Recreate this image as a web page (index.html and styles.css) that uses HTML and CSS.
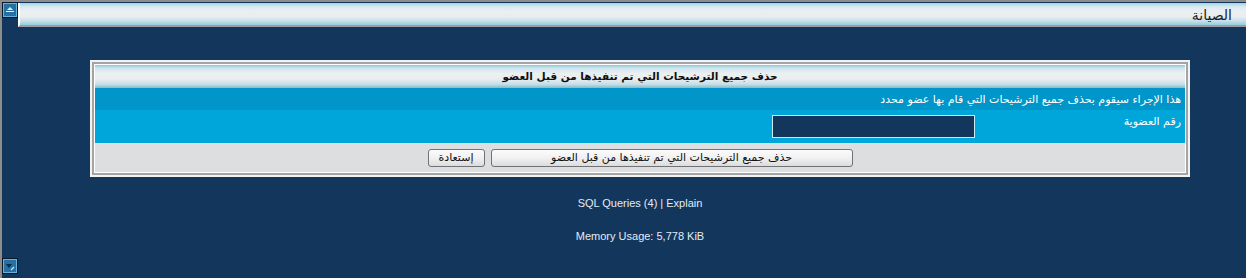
FILE: index.html
```html
<!DOCTYPE html>
<html lang="ar">
<head>
<meta charset="utf-8">
<title>الصيانة</title>
<link rel="stylesheet" href="styles.css">
</head>
<body>
<div class="topbar">
  <span class="ctl ctl-up">
    <svg width="12" height="12" viewBox="0 0 12 12"><polygon points="3,6 9,6 6,3" fill="#dff2fb"/><rect x="2" y="7" width="8" height="1" fill="#dff2fb"/></svg>
  </span>
  <div class="titlebar" dir="rtl">الصيانة</div>
</div>

<main class="main">
  <div class="panel" dir="rtl">
    <div class="panel-frame">
      <div class="panel-body">
        <div class="panel-head">حذف جميع الترشيحات التي تم تنفيذها من قبل العضو</div>
        <div class="row row-desc">هذا الإجراء سيقوم بحذف جميع الترشيحات التي قام بها عضو محدد</div>
        <div class="row row-field">
          <label class="field-label" for="uid">رقم العضوية</label>
          <div class="field-cell"><input id="uid" class="field-input" type="text"></div>
        </div>
        <div class="row row-actions">
          <button class="btn btn-main" type="button">حذف جميع الترشيحات التي تم تنفيذها من قبل العضو</button>
          <button class="btn btn-reset" type="button">إستعادة</button>
        </div>
      </div>
    </div>
  </div>

  <div class="footer">
    <p class="foot-line">SQL Queries (4) | Explain</p>
    <p class="foot-line">Memory Usage: 5,778 KiB</p>
  </div>
</main>

<div class="bottombar">
  <span class="ctl ctl-down">
    <svg width="12" height="12" viewBox="0 0 12 12"><polygon points="2,4 8,4 5,8" fill="#0d2b4a"/><line x1="7" y1="10" x2="10" y2="7" stroke="#bfe6f7" stroke-width="1.2"/></svg>
  </span>
</div>
</body>
</html>
```

FILE: styles.css
```css
html, body {
  margin: 0;
  padding: 0;
}
body {
  height: 278px;
  box-sizing: border-box;
  background: #13365c;
  border-top: 2px solid #8c8c8c;
  border-left: 2px solid #8c8c8c;
  display: flex;
  flex-direction: column;
  font-family: "Liberation Sans", "DejaVu Sans", sans-serif;
  overflow: hidden;
}

.topbar {
  display: flex;
  align-items: flex-start;
  height: 25px;
}
.ctl {
  display: flex;
  align-items: center;
  justify-content: center;
  width: 14px;
  height: 14px;
  background: #2670a2;
  border: 1px solid #0a1a2a;
  box-shadow: inset 0 0 0 1px #66b4dc;
  flex: none;
}
.titlebar {
  flex: 1;
  margin-top: 1px;
  height: 22px;
  border-left: 2px solid #ffffff;
  border-bottom: 2px solid #9a9ea2;
  background: linear-gradient(#a4d3e6 0%, #d9ecf3 18%, #eceff1 40%, #e9edef 62%, #c4e1eb 82%, #98cbdd 100%);
  font-family: "DejaVu Sans", sans-serif;
  font-size: 14px;
  line-height: 24px;
  color: #1b1b1b;
  padding-right: 14px;
  text-align: right;
}

.main {
  padding: 33px 56px 0 88px;
}
.panel {
  border: 2px solid #f2f2f2;
}
.panel-frame {
  border: 2px solid #a2a4a6;
}
.panel-body {
  border: 1px solid #ffffff;
  font-family: "DejaVu Sans", sans-serif;
}
.panel-head {
  height: 23px;
  line-height: 23px;
  text-align: center;
  font-weight: bold;
  font-size: 10.5px;
  color: #101010;
  background: linear-gradient(#8fc6dc 0%, #cfe6ee 14%, #edf0f1 38%, #e9edef 62%, #c2dfe9 84%, #8fb6c5 100%);
}
.row {
  color: #ffffff;
  font-size: 11px;
}
.row-desc {
  background: #0096c9;
  height: 22px;
  line-height: 24px;
  padding-right: 4px;
}
.row-field {
  background: #00a6da;
  height: 33px;
  border-bottom: 1px solid #c9e8f2;
  display: grid;
  grid-template-columns: 206px 1fr;
}
.field-label {
  padding: 5px 4px 0 0;
  line-height: 14px;
}
.field-cell {
  padding: 5px 4px 0 0;
}
.field-input {
  display: block;
  box-sizing: border-box;
  width: 203px;
  height: 23px;
  margin: 0;
  background: #13365c;
  border: 1px solid #cbe8f5;
  color: #ffffff;
  padding: 0 4px;
}
.row-actions {
  background: #dddee0;
  height: 28px;
  display: flex;
  justify-content: center;
  align-items: flex-start;
  gap: 6px;
  padding-top: 5px;
  box-sizing: border-box;
}
.btn {
  height: 18px;
  padding: 0;
  margin: 0;
  border: 1px solid #6f7377;
  border-radius: 3px;
  background: linear-gradient(#fbfbfb 0%, #f1f1f1 50%, #dcdcdc 100%);
  font-family: "DejaVu Sans", sans-serif;
  font-size: 11px;
  line-height: 16px;
  color: #111111;
}
.btn-main {
  width: 362px;
}
.btn-reset {
  width: 57px;
}

.footer {
  text-align: center;
  color: #e3ebf3;
  font-size: 11px;
  padding-top: 19px;
}
.foot-line {
  margin: 0 0 19px 0;
  line-height: 14px;
}
.foot-line:last-child {
  margin-bottom: 0;
}

.bottombar {
  margin-top: auto;
  padding-bottom: 4px;
  line-height: 0;
}
.bottombar .ctl {
  display: inline-flex;
}
```
